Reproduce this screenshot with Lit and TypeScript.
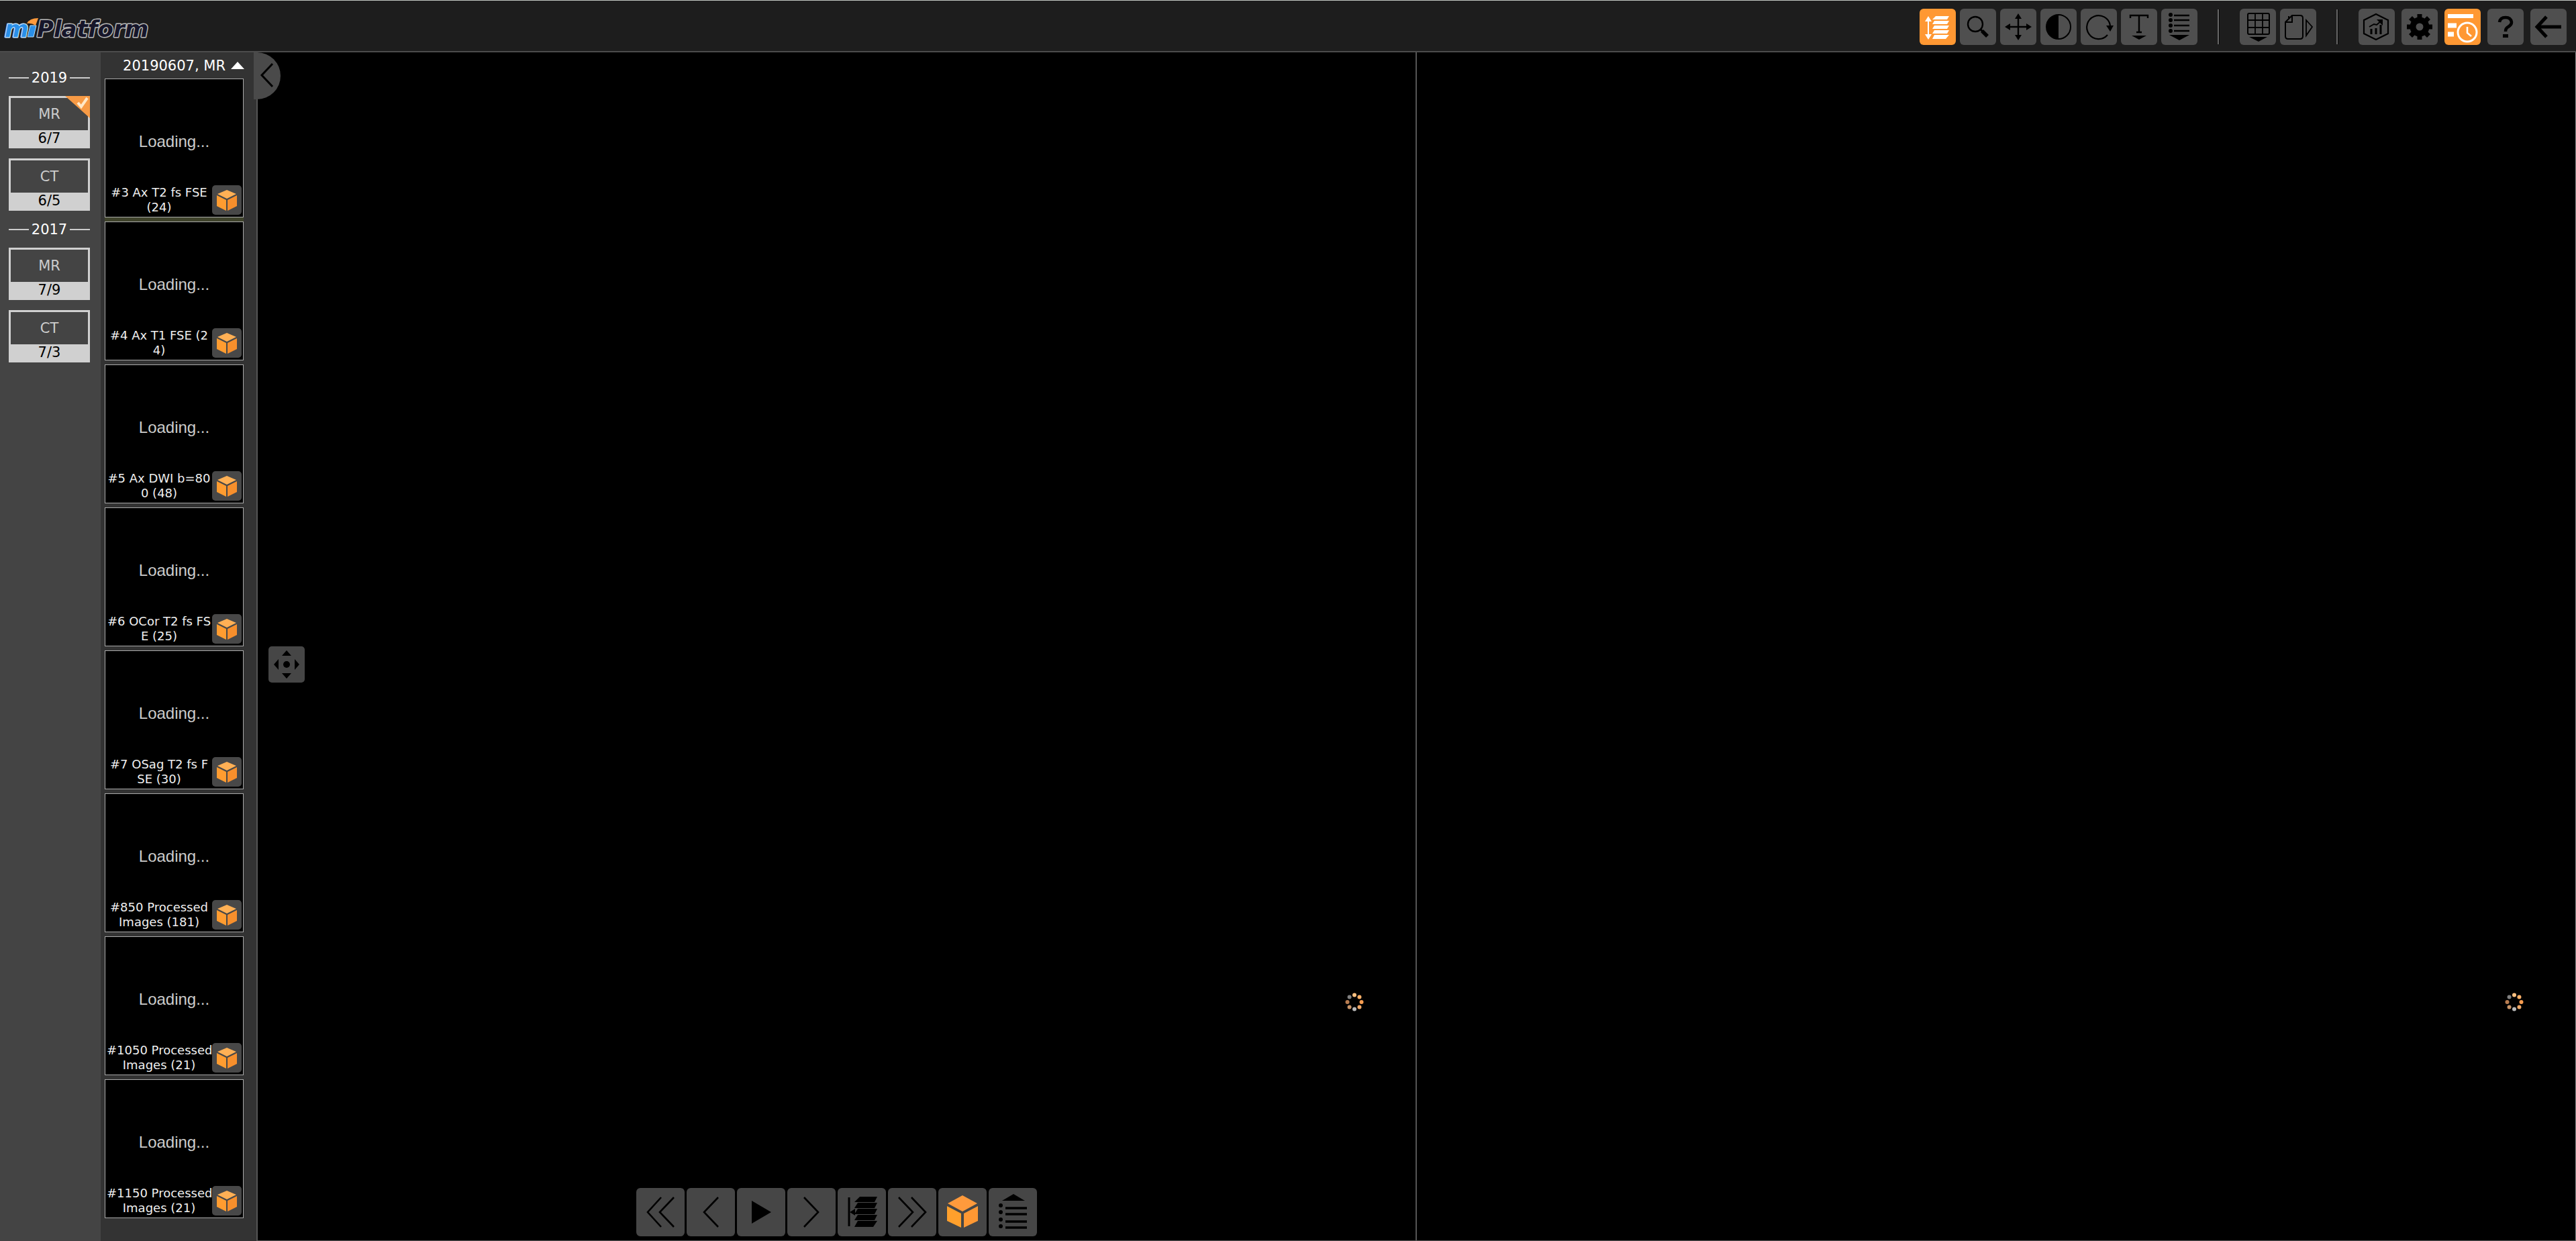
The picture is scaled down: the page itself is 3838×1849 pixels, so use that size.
import { LitElement, html, css, svg } from "lit";
import { customElement } from "lit/decorators.js";

const G: Record<string, unknown> = {
  stack: svg`<g fill="#fff" stroke="none"><path d="M13 11l5 8h-4v19h4l-5 8-5-8h4V19H8z"/><path d="M24 11h20l-3 5H19zM22 18h22l-3 5H19zM22 25h22l-3 5H19zM22 32h22l-3 5H19zM22 39h22l-5 6H19z"/></g>`,
  zoom: svg`<circle cx="23" cy="23" r="11" stroke-width="2.4"/><path d="M31 31l3 3" stroke-width="3"/><path d="M33 33l8 8" stroke-width="5.5"/>`,
  move: svg`<path d="M27 13v29M12 27h30" stroke-width="2.4"/><path stroke="none" fill="#000" d="M27 7l5 8H22zM27 47l5-8H22zM7 27l8-5v10zM47 27l-8-5v10z"/>`,
  contrast: svg`<circle cx="27" cy="27" r="18" stroke-width="2"/><path d="M27 9a18 18 0 0 0 0 36z" fill="#000" stroke="none"/>`,
  rotate: svg`<path d="M40 39A17.5 17.5 0 1 1 44 25" stroke-width="2.2"/><path d="M38 25h11l-5 9z" fill="#000" stroke="none"/>`,
  text: svg`<path d="M14 14v-4h26v4M27 10v25M23 35h8" stroke-width="2.4"/><path d="M16 40h22l-11 6z" fill="#000" stroke="none"/>`,
  list: svg`<g stroke="none" fill="#000"><circle cx="14" cy="9" r="3"/><circle cx="14" cy="17" r="3"/><circle cx="14" cy="25" r="3"/><circle cx="14" cy="33" r="3"/><path d="M12 39h30l-15 8z"/></g><path d="M19 10h23M19 17h23M19 25h23M19 33h23" stroke-width="2.6"/>`,
  grid: svg`<rect x="12" y="7" width="32" height="31" rx="2" stroke-width="2"/><path d="M12 17h32M12 28h32M23 7v31M34 7v31" stroke-width="1.8"/><path d="M14 42h27l-13 7z" fill="#000" stroke="none"/>`,
  pages: svg`<path d="M18 10h12q4 0 4 4v27q0 4-4 4H12q-4 0-4-4V20z" stroke-width="2"/><path d="M18 10v10H8M21 10h8M13 14v-3" stroke-width="2"/><path d="M39 17l9 10-9 13z" stroke-width="1.8"/>`,
  report: svg`<path d="M26 8l18 9v20l-18 9-18-9V17z" stroke-width="2.2"/><path d="M19 38v-8M26 38v-9M33 38V24" stroke-width="3"/><path d="M16 27l7-4 4 1 7-6" stroke-width="2"/><path d="M27 16h9v9z" fill="#000" stroke="none"/>`,
  gear: svg`<circle cx="27" cy="27" r="10" stroke-width="9"/><path stroke-width="7" d="M27 8v7M27 39v7M8 27h7M39 27h7M13.5 13.500l5 5M35.500 35.500l5 5M13.500 40.500l5-5M35.500 18.500l5-5"/>`,
  worklist: svg`<g stroke="#fff"><path d="M5 11h38" stroke-width="6"/><path d="M5 25h13M5 38h9" stroke-width="7"/><circle cx="34" cy="35" r="14" stroke-width="3" fill="#ff9833"/><path d="M34 27v9l6 5" stroke-width="2.6"/></g>`,
  help: svg`<path d="M18 20q1-7 9-7t9 7q0 4-5 7-4 2-4 7" stroke-width="4.600"/><path d="M23 38h8v5h-8z" fill="#000" stroke="none"/>`,
  back: svg`<path d="M9 27h37M24 12L10 27l14 15" stroke-width="5"/>`,
  first: svg`<path d="M37 14L17 36l20 22M56 14L35 36l21 22" stroke-width="2.6"/>`,
  prev: svg`<path d="M47 14L26 36l21 22" stroke-width="2.6"/>`,
  play: svg`<path d="M22 19l29 17-29 17z" fill="#000" stroke="none"/>`,
  next: svg`<path d="M25 14l21 22-21 22" stroke-width="2.600"/>`,
  slices: svg`<path d="M17 14v43" stroke-width="3"/><path stroke="none" fill="#000" d="M18 36l8-5v10zM33 13h26l-4 8H25zM30 22h29l-4 8H25zM30 31h29l-4 8H25zM30 40h29l-4 8H25zM30 49h29l-6 9H25z"/>`,
  last: svg`<path d="M16 14l21 22-21 22M35 14l21 22-21 22" stroke-width="2.6"/>`,
  cubeBig: svg`<g stroke="none"><path fill="#ff9a3c" d="M36 11l22 12-22 12-22-12z"/><path fill="#ffa02c" d="M13 27l21 11v21L13 49z"/><path fill="#ff9833" d="M59 27L38 38v21l21-10z"/></g>`,
  menuUp: svg`<path fill="#000" stroke="none" d="M20 19h34L37 9z"/><g fill="#000" stroke="none"><circle cx="18" cy="26" r="3"/><circle cx="18" cy="36" r="3"/><circle cx="18" cy="47" r="3"/><circle cx="18" cy="57" r="3"/></g><path d="M25 30h32M25 39h32M25 50h32M25 59h32" stroke-width="3.600"/>`,
  cube: svg`<g stroke="none"><path fill="#ffb055" d="M22 7l14 6-14 7-14-7z"/><path fill="#ff9c30" d="M7 15l14 7v16L7 31z"/><path fill="#f78f2c" d="M37 15l-14 7v16l14-7z"/></g>`,
  pan: svg`<g fill="#000" stroke="none"><circle cx="27" cy="27" r="5"/><path d="M27 6l7 8H20zM27 48l7-8H20zM8 27l7-8v16zM46 27l-7-8v16z"/></g>`,
};

const icon = (name: string, size: number) =>
  html`<svg class="ico" viewBox="0 0 ${size} ${size}" width=${size} height=${size} fill="none" stroke="#000" aria-hidden="true">${G[name]}</svg>`;

const tools = [
  [["stack", "Scroll stack"], ["zoom", "Zoom"], ["move", "Pan"], ["contrast", "Window level"], ["rotate", "Rotate"], ["text", "Annotate"], ["list", "More tools"]],
  [["grid", "Layout"], ["pages", "Series pages"]],
];
const system = [["report", "Report"], ["gear", "Settings"], ["worklist", "Study history"], ["help", "Help"], ["back", "Back"]];
const active = new Set(["stack", "worklist"]);
const player = [["first", "First"], ["prev", "Previous"], ["play", "Play"], ["next", "Next"], ["slices", "Slices"], ["last", "Last"], ["cubeBig", "3D view"], ["menuUp", "Menu"]];
const years = [
  { year: "2019", studies: [{ type: "MR", date: "6/7", on: true }, { type: "CT", date: "6/5", on: false }] },
  { year: "2017", studies: [{ type: "MR", date: "7/9", on: false }, { type: "CT", date: "7/3", on: false }] },
];
const series = [
  ["#3 Ax T2 fs FSE", "(24)"],
  ["#4 Ax T1 FSE (2", "4)"],
  ["#5 Ax DWI b=80", "0 (48)"],
  ["#6 OCor T2 fs FS", "E (25)"],
  ["#7 OSag T2 fs F", "SE (30)"],
  ["#850 Processed", "Images (181)"],
  ["#1050 Processed", "Images (21)"],
  ["#1150 Processed", "Images (21)"],
];
const dots = ["#ffc080", "#ffb068", "#f89c50", "#f0a868", "#b8b8b8", "#c89468", "#b87c50", "#808080"];

@customElement("app-root")
export class AppRoot extends LitElement {
  static styles = css`
    :host { display: flex; flex-direction: column; height: 100vh; background: #000; color: #fff;
      font-family: Verdana, "DejaVu Sans", sans-serif; font-size: 21px; overflow: hidden; }
    * { box-sizing: border-box; }
    button { border: 0; padding: 0; margin: 0; font: inherit; color: inherit; background: none; cursor: pointer; }
    .ico { display: block; }
    .bar { flex: none; display: flex; align-items: center; justify-content: space-between; height: 78px;
      padding: 2px 14px 0 4px; background: #1d1d1d; border-top: 1px solid #c4c8c4; border-bottom: 2px solid #4c4c4c; }
    .logo { display: block; }
    .logo text { font: italic bold 34px Verdana, "DejaVu Sans", sans-serif; paint-order: stroke; stroke-linejoin: round; }
    .tools { display: flex; align-items: center; gap: 30px; }
    .group { display: flex; gap: 6px; }
    .group.wide { gap: 10px; }
    .tool { width: 54px; height: 54px; border-radius: 6px; background: #4f4f4f; }
    .tool.on { background: #ff9833; }
    .sep { width: 3px; height: 52px; background: #050505; border-left: 2px solid #666; }
    .main { flex: 1; min-height: 0; display: flex; }
    .years { flex: none; width: 150px; padding: 22px 16px 0 13px; background: #444; }
    .year { display: flex; align-items: center; gap: 4px; height: 32px; margin: 0 0 11px; font-size: 21px; font-weight: normal; }
    .year::before, .year::after { content: ""; flex: 1; height: 2px; background: #ccc; }
    .study { position: relative; display: flex; flex-direction: column; width: 100%; height: 78px; margin-bottom: 15px;
      border: 3px solid #d0d0d0; text-align: center; }
    .study:last-child { margin-bottom: 12px; }
    .kind { flex: 1; line-height: 48px; color: #ccc; }
    .date { height: 25px; line-height: 24px; background: #d0d0d0; color: #000; }
    .mark { position: absolute; top: -3px; right: -3px; }
    .series { flex: none; width: 234px; background: #333; border-right: 2px solid #555; padding: 0 6px; }
    .title { display: flex; align-items: center; justify-content: flex-end; gap: 8px; width: 208px; height: 39px; }
    .cards { display: grid; gap: 6px; width: 207px; }
    .card { display: flex; flex-direction: column; height: 207px; background: #000; border: 1px solid #aaa; }
    .card:first-child { box-shadow: 0 6px 0 #40442c; }
    .load { flex: 1; display: flex; align-items: center; justify-content: center; padding-top: 28px;
      font: 24px "Liberation Sans", sans-serif; color: #ccc; }
    .foot { display: flex; justify-content: space-between; align-items: flex-end; height: 48px; padding: 0 2px 3px 2px; }
    .cap { flex: none; width: 156px; font-size: 18px; line-height: 22px; text-align: center; color: #eee; white-space: nowrap; }
    .cap span { display: block; }
    .cubeb { flex: none; width: 44px; height: 44px; border-radius: 5px; background: #484848; margin-left: auto; }
    .views { position: relative; flex: 1; display: grid; grid-template-columns: 1725fr 1729fr; border-bottom: 1px solid #555; border-right: 1px solid #888; }
    .pane { position: relative; display: flex; align-items: flex-end; justify-content: center; padding-bottom: 6px; }
    .pane + .pane { border-left: 2px solid #555; }
    .handle { position: absolute; left: -6px; top: 0; width: 40px; height: 70px; background: #4a4a4a; border-radius: 0 35px 35px 0; }
    .pan { position: absolute; left: 16px; top: 885px; width: 54px; height: 54px; border-radius: 5px; background: #464646; }
    .spin { position: absolute; right: 77px; bottom: 341px; }
    .player { display: flex; gap: 3px; }
    .play { width: 72px; height: 72px; border-radius: 6px; background: #464646; }
  `;

  private tool([name, label]: string[]) {
    return html`<button class="tool ${active.has(name) ? "on" : ""}" aria-label=${label}>${icon(name, 54)}</button>`;
  }

  private spinner() {
    return svg`${dots.map((c, i) => {
      const a = (i * Math.PI) / 4;
      return svg`<circle cx=${14 + 10.5 * Math.sin(a)} cy=${14 - 10.5 * Math.cos(a)} r="3" fill=${c}/>`;
    })}`;
  }

  render() {
    return html`
      <header class="bar">
        <svg class="logo" width="230" height="46" viewBox="0 0 230 46" role="img" aria-label="miPlatform">
          <text x="3" y="38" fill="#2a8fe8" stroke="#b8dcf8" stroke-width="3">m</text>
          <path d="M41 21h9l-4 17h-9z" fill="#2a8fe8" stroke="#b8dcf8"/>
          <path d="M36 18q4-8 17-8l-4 11q-6-4-13-3z" fill="#ff9a3c"/>
          <text x="51" y="38" fill="#16162a" stroke="#b8b8b8" stroke-width="3">Platform</text>
        </svg>
        <nav class="tools">
          ${tools.map((g) => html`<div class="group">${g.map((t) => this.tool(t))}</div><span class="sep"></span>`)}
          <div class="group wide">${system.map((t) => this.tool(t))}</div>
        </nav>
      </header>
      <div class="main">
        <aside class="years">
          ${years.map((y) => html`<section>
            <h2 class="year">${y.year}</h2>
            ${y.studies.map((s) => html`<button class="study">
              <span class="kind">${s.type}</span><span class="date">${s.date}</span>
              ${s.on ? html`<svg class="mark" width="37" height="33" viewBox="0 0 37 33" aria-hidden="true">
                <path d="M0 0h37v33z" fill="#f79a45"/><path d="M19 10l5 6 9-13" fill="none" stroke="#ffe8c8" stroke-width="4"/></svg>` : ""}
            </button>`)}
          </section>`)}
        </aside>
        <section class="series">
          <button class="title">20190607, MR
            <svg width="20" height="12" viewBox="0 0 20 12" aria-hidden="true"><path d="M0 11L10 0l10 11z" fill="#fff"/></svg>
          </button>
          <div class="cards">
            ${series.map((lines) => html`<article class="card">
              <div class="load">Loading...</div>
              <div class="foot">
                <div class="cap">${lines.map((l) => html`<span>${l}</span>`)}</div>
                <button class="cubeb" aria-label="3D view">${icon("cube", 44)}</button>
              </div>
            </article>`)}
          </div>
        </section>
        <main class="views">
          ${[0, 1].map((i) => html`<div class="pane">
            ${i === 0 ? html`<div class="player">${player.map(([n, l]) => html`<button class="play" aria-label=${l}>${icon(n, 72)}</button>`)}</div>` : ""}
            <svg class="spin" width="28" height="28" viewBox="0 0 28 28" role="img" aria-label="Busy">${this.spinner()}</svg>
          </div>`)}
          <button class="handle" aria-label="Collapse panel">
            <svg class="ico" width="40" height="70" viewBox="0 0 40 70" fill="none" stroke="#000" stroke-width="3"><path d="M28 17L12 34l16 17"/></svg>
          </button>
          <button class="pan" aria-label="Move toolbar">${icon("pan", 54)}</button>
        </main>
      </div>
    `;
  }
}
